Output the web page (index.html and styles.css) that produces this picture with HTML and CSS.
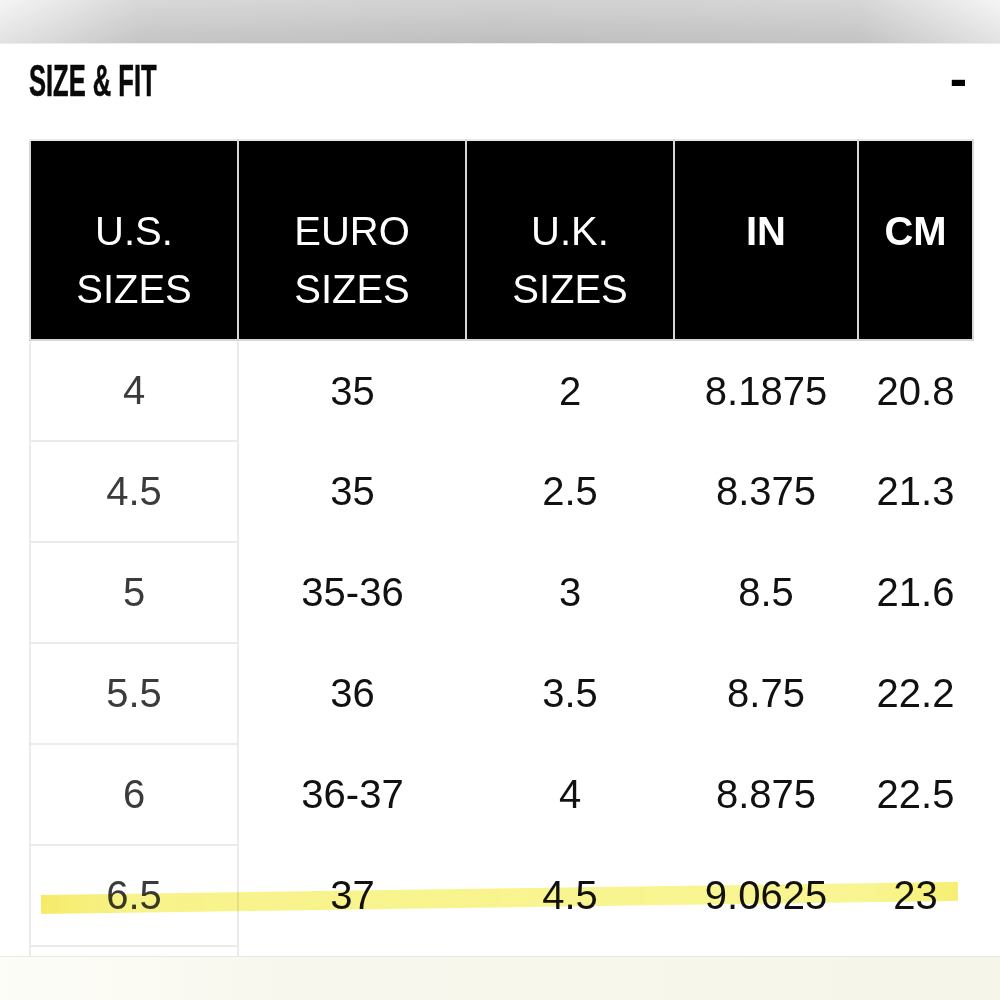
FILE: index.html
```html
<!DOCTYPE html>
<html>
<head>
<meta charset="utf-8">
<link rel="stylesheet" href="styles.css">
</head>
<body>
<div class="topbar"></div>
<div class="sheet">
  <div class="section-head">
    <h2 class="title">SIZE &amp; FIT</h2>
    <span class="toggle">-</span>
  </div>
  <table class="sizes">
    <colgroup>
      <col class="c1"><col class="c2"><col class="c3"><col class="c4"><col class="c5">
    </colgroup>
    <thead>
      <tr>
        <th>U.S.<br>SIZES</th>
        <th>EURO<br>SIZES</th>
        <th>U.K.<br>SIZES</th>
        <th class="bold">IN</th>
        <th class="bold">CM</th>
      </tr>
    </thead>
    <tbody>
      <tr><td>4</td><td>35</td><td>2</td><td>8.1875</td><td>20.8</td></tr>
      <tr><td>4.5</td><td>35</td><td>2.5</td><td>8.375</td><td>21.3</td></tr>
      <tr><td>5</td><td>35-36</td><td>3</td><td>8.5</td><td>21.6</td></tr>
      <tr><td>5.5</td><td>36</td><td>3.5</td><td>8.75</td><td>22.2</td></tr>
      <tr><td>6</td><td>36-37</td><td>4</td><td>8.875</td><td>22.5</td></tr>
      <tr><td>6.5</td><td>37</td><td>4.5</td><td>9.0625</td><td>23</td></tr>
      <tr><td></td><td></td><td></td><td></td><td></td></tr>
    </tbody>
  </table>
  <div class="highlight"></div>
</div>
<div class="bottombar"></div>
</body>
</html>
```
FILE: styles.css
```css
html, body {
  margin: 0;
  padding: 0;
  background: #ffffff;
  font-family: "Liberation Sans", Arial, sans-serif;
}

.topbar {
  height: 43px;
  border-bottom: 1px solid #ececec;
  background:
    linear-gradient(to bottom, rgba(255,255,255,0.1), rgba(0,0,0,0.07)),
    linear-gradient(to right, #f4f4f4 0%, #d4d4d4 14%, #cdcdcd 50%, #d2d2d2 86%, #f4f4f4 100%);
}

.sheet {
  position: relative;
  height: 912px;
  overflow: hidden;
}

.section-head {
  display: flex;
  justify-content: space-between;
  align-items: flex-start;
  padding: 12px 33px 0 29px;
  height: 50px;
  margin-bottom: 33px;
}

.title {
  margin: 0;
  font-size: 44px;
  line-height: 50px;
  font-weight: 700;
  color: #0a0a0a;
  transform: scaleX(0.58);
  transform-origin: left center;
  white-space: nowrap;
  -webkit-text-stroke: 0.6px #0a0a0a;
}

.toggle {
  font-size: 52px;
  font-weight: 700;
  line-height: 50px;
  color: #000;
  margin-top: -3px;
}

.sizes {
  margin-left: 29px;
  width: 943px;
  border-collapse: collapse;
  table-layout: fixed;
}

.c1 { width: 208px; }
.c2 { width: 228px; }
.c3 { width: 208px; }
.c4 { width: 184px; }
.c5 { width: 115px; }

.sizes th {
  background: #000;
  color: #fff;
  font-weight: 400;
  font-size: 40px;
  line-height: 58px;
  height: 200px;
  padding: 61px 0 0 0;
  box-sizing: border-box;
  vertical-align: top;
  text-align: center;
  border: 2px solid #d6d6d6;
  border-top-color: #e9e9e9;
}

.sizes th.bold {
  font-weight: 700;
}

.sizes td {
  height: 101px;
  padding: 0;
  box-sizing: border-box;
  text-align: center;
  vertical-align: middle;
  font-size: 40px;
  color: #111;
}

.sizes td:first-child {
  color: #3b3b3b;
  border-left: 2px solid #ebebeb;
  border-right: 2px solid #ebebeb;
  border-bottom: 2px solid #ebebeb;
}

.highlight {
  position: absolute;
  left: 41px;
  top: 851px;
  width: 917px;
  height: 19px;
  background: linear-gradient(to right, rgba(243,231,80,0.85), rgba(246,240,110,0.8) 10%, rgba(247,242,115,0.78) 90%, rgba(245,236,90,0.85));
  mix-blend-mode: multiply;
  transform: rotate(-0.82deg);
  transform-origin: left center;
  filter: blur(0.6px);
}

.bottombar {
  height: 44px;
  border-top: 1px solid #e8e8e4;
  background: linear-gradient(to right, #fdfdf8 0%, #f8f7ed 30%, #f8f7ec 60%, #f6f5ea 100%);
}
```
